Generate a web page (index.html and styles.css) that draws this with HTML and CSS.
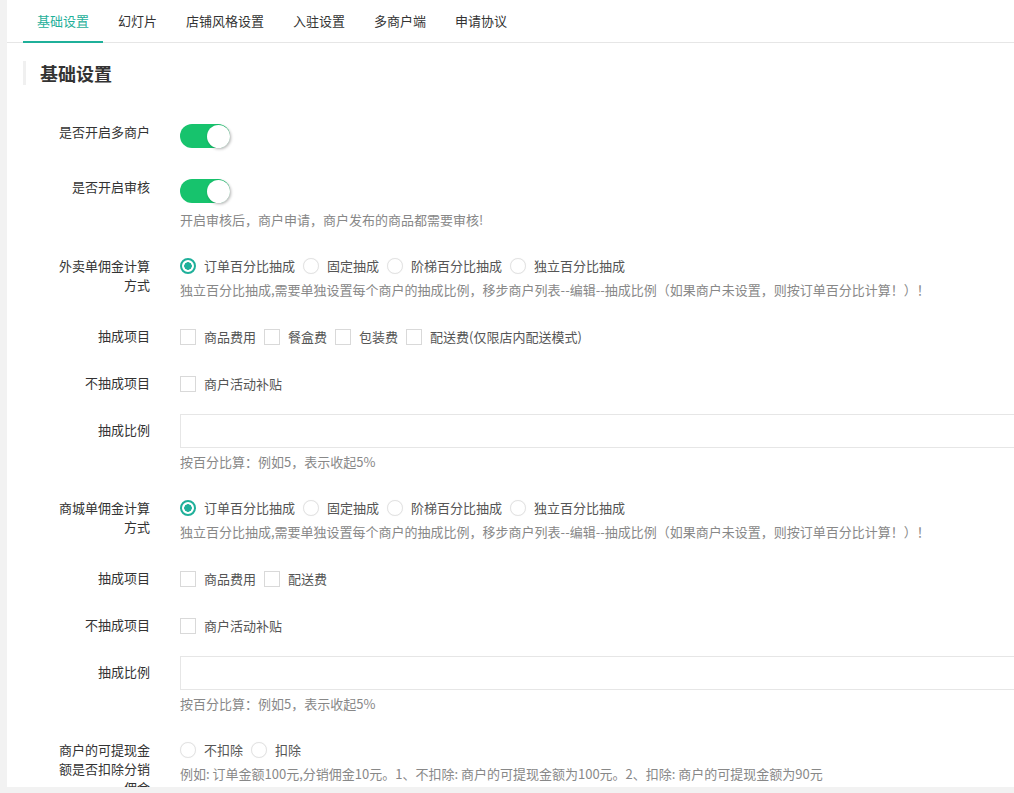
FILE: index.html
```html
<!DOCTYPE html>
<html lang="zh-CN">
<head>
<meta charset="utf-8">
<title>基础设置</title>
<link rel="stylesheet" href="styles.css">
</head>
<body>
<div class="panel">
  <div class="tabs">
    <a class="tab active">基础设置</a>
    <a class="tab">幻灯片</a>
    <a class="tab">店铺风格设置</a>
    <a class="tab">入驻设置</a>
    <a class="tab">多商户端</a>
    <a class="tab">申请协议</a>
  </div>
  <h2 class="title">基础设置</h2>
  <div class="form">
    <div class="row">
      <div class="label">是否开启多商户</div>
      <div class="ctrl"><span class="switch"><span class="knob"></span></span></div>
    </div>
    <div class="row">
      <div class="label">是否开启审核</div>
      <div class="ctrl">
        <span class="switch"><span class="knob"></span></span>
        <div class="help help-switch">开启审核后，商户申请，商户发布的商品都需要审核!</div>
      </div>
    </div>
    <div class="row">
      <div class="label">外卖单佣金计算方式</div>
      <div class="ctrl">
        <div class="opts">
          <span class="opt"><span class="radio on"></span>订单百分比抽成</span>
          <span class="opt"><span class="radio"></span>固定抽成</span>
          <span class="opt"><span class="radio"></span>阶梯百分比抽成</span>
          <span class="opt"><span class="radio"></span>独立百分比抽成</span>
        </div>
        <div class="help">独立百分比抽成,需要单独设置每个商户的抽成比例，移步商户列表--编辑--抽成比例（如果商户未设置，则按订单百分比计算！）！</div>
      </div>
    </div>
    <div class="row row-check">
      <div class="label">抽成项目</div>
      <div class="ctrl">
        <div class="opts">
          <span class="opt"><span class="box"></span>商品费用</span>
          <span class="opt"><span class="box"></span>餐盒费</span>
          <span class="opt"><span class="box"></span>包装费</span>
          <span class="opt"><span class="box"></span>配送费(仅限店内配送模式)</span>
        </div>
      </div>
    </div>
    <div class="row row-check">
      <div class="label">不抽成项目</div>
      <div class="ctrl">
        <div class="opts">
          <span class="opt"><span class="box"></span>商户活动补贴</span>
        </div>
      </div>
    </div>
    <div class="row">
      <div class="label">抽成比例</div>
      <div class="ctrl">
        <input class="input" type="text">
        <div class="help">按百分比算：例如5，表示收起5%</div>
      </div>
    </div>
    <div class="row">
      <div class="label">商城单佣金计算方式</div>
      <div class="ctrl">
        <div class="opts">
          <span class="opt"><span class="radio on"></span>订单百分比抽成</span>
          <span class="opt"><span class="radio"></span>固定抽成</span>
          <span class="opt"><span class="radio"></span>阶梯百分比抽成</span>
          <span class="opt"><span class="radio"></span>独立百分比抽成</span>
        </div>
        <div class="help">独立百分比抽成,需要单独设置每个商户的抽成比例，移步商户列表--编辑--抽成比例（如果商户未设置，则按订单百分比计算！）！</div>
      </div>
    </div>
    <div class="row row-check">
      <div class="label">抽成项目</div>
      <div class="ctrl">
        <div class="opts">
          <span class="opt"><span class="box"></span>商品费用</span>
          <span class="opt"><span class="box"></span>配送费</span>
        </div>
      </div>
    </div>
    <div class="row row-check">
      <div class="label">不抽成项目</div>
      <div class="ctrl">
        <div class="opts">
          <span class="opt"><span class="box"></span>商户活动补贴</span>
        </div>
      </div>
    </div>
    <div class="row">
      <div class="label">抽成比例</div>
      <div class="ctrl">
        <input class="input" type="text">
        <div class="help">按百分比算：例如5，表示收起5%</div>
      </div>
    </div>
    <div class="row">
      <div class="label">商户的可提现金额是否扣除分销佣金</div>
      <div class="ctrl">
        <div class="opts">
          <span class="opt"><span class="radio"></span>不扣除</span>
          <span class="opt"><span class="radio"></span>扣除</span>
        </div>
        <div class="help">例如: 订单金额100元,分销佣金10元。1、不扣除: 商户的可提现金额为100元。2、扣除: 商户的可提现金额为90元</div>
      </div>
    </div>
  </div>
</div>
</body>
</html>
```

FILE: styles.css
```css
html, body {
  margin: 0;
  padding: 0;
}
body {
  background: #f2f2f2;
  font-family: "Noto Sans CJK SC", "Microsoft YaHei", sans-serif;
  font-size: 13px;
  color: #333;
  overflow: hidden;
}
.panel {
  margin-left: 7px;
  height: 787px;
  background: #fff;
  overflow: hidden;
}
.tabs {
  display: flex;
  padding-left: 16px;
  border-bottom: 1px solid #e6e6e6;
}
.tab {
  display: block;
  padding: 0 14px;
  line-height: 41px;
  color: #333;
  white-space: nowrap;
}
.tab + .tab {
  margin-left: 1px;
}
.tab.active {
  color: #1fb09a;
  border-bottom: 2px solid #1fb09a;
  margin-bottom: -1px;
}
.title {
  margin: 18px 0 0 16px;
  padding-left: 14px;
  border-left: 3px solid #f0f0f0;
  font-size: 18px;
  line-height: 24px;
  font-weight: bold;
  color: #333;
}
.form {
  margin-top: 37px;
}
.row {
  display: grid;
  grid-template-columns: 93px 1fr;
  column-gap: 30px;
  padding-left: 50px;
  align-items: start;
  margin-bottom: 26px;
}
.label {
  text-align: right;
  line-height: 19px;
  color: #333;
}
.ctrl {
  line-height: 20px;
  min-width: 0;
}
.row-check .ctrl {
  line-height: 21px;
}
.switch {
  position: relative;
  display: block;
  width: 50px;
  height: 24px;
  margin: 2px 0 3px;
  border-radius: 12px;
  background: #17c36d;
}
.knob {
  position: absolute;
  right: 0;
  top: 0.5px;
  width: 23px;
  height: 23px;
  border-radius: 50%;
  background: #fff;
  box-shadow: 1px 1px 3px rgba(0, 0, 0, 0.3);
}
.help {
  margin-top: 4px;
  line-height: 20px;
  color: #888;
  white-space: nowrap;
}
.help-switch {
  margin-top: 7px;
}
.opts {
  display: flex;
  white-space: nowrap;
}
.opt {
  display: inline-flex;
  align-items: center;
  margin-right: 8px;
  color: #555;
}
.radio {
  box-sizing: border-box;
  width: 16px;
  height: 16px;
  margin-right: 8px;
  border-radius: 50%;
  border: 1px solid #e3e3e3;
  box-shadow: 0 0 1px rgba(0, 0, 0, 0.08);
  background: #fff;
}
.radio.on {
  border: 2px solid #1fb09a;
  background: radial-gradient(circle, #1fb09a 0 3.5px, #fff 4px);
  box-shadow: none;
}
.box {
  box-sizing: border-box;
  width: 16px;
  height: 16px;
  margin-right: 8px;
  border: 1px solid #d9d9d9;
  background: #fff;
}
.input {
  display: block;
  box-sizing: border-box;
  width: 860px;
  height: 34px;
  margin: -6px 0 0;
  border: 1px solid #e6e6e6;
  background: #fff;
  font: inherit;
}
```
